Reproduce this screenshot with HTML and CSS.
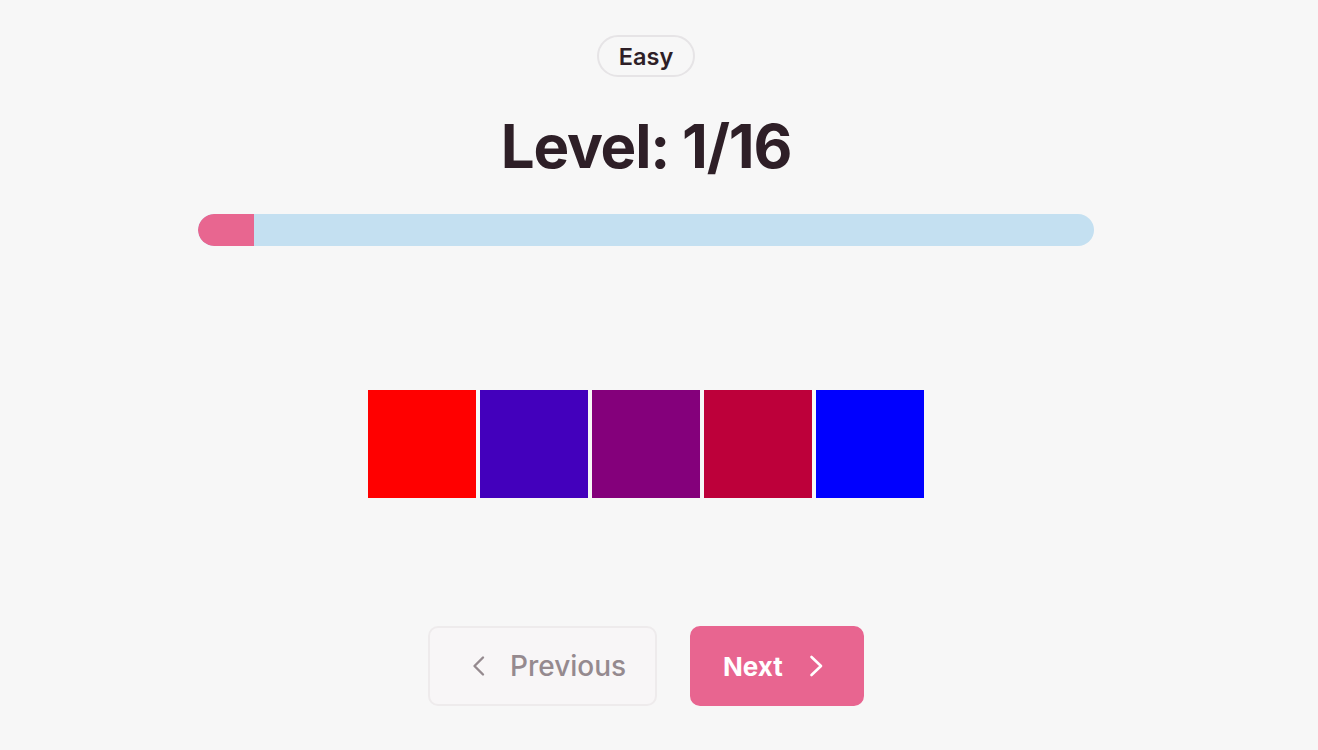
FILE: index.html
```html
<!DOCTYPE html>
<html lang="en">
<head>
<meta charset="utf-8">
<title>Level 1/16</title>
<link rel="stylesheet" href="styles.css">
</head>
<body>
<main class="game">
  <span class="badge">Easy</span>
  <h1 class="title">Level: 1/16</h1>
  <div class="progress"><div class="progress-fill" style="width: 6.25%"></div></div>
  <div class="swatches">
    <div class="swatch" style="background:#ff0000"></div>
    <div class="swatch" style="background:#4300bc"></div>
    <div class="swatch" style="background:#84007b"></div>
    <div class="swatch" style="background:#bd003a"></div>
    <div class="swatch" style="background:#0000ff"></div>
  </div>
  <div class="nav">
    <button class="btn btn-prev" type="button">
      <svg class="chev" width="24" height="24" viewBox="0 0 24 24" aria-hidden="true"><polyline points="21,3.5 12.5,12 21,20.5" /></svg>
      <span>Previous</span>
    </button>
    <button class="btn btn-next" type="button">
      <span>Next</span>
      <svg class="chev" width="24" height="24" viewBox="0 0 24 24" aria-hidden="true"><polyline points="3.5,3 13,12 3.5,21" /></svg>
    </button>
  </div>
</main>
</body>
</html>
```

FILE: styles.css
```css
* { box-sizing: border-box; }

html, body {
  margin: 0;
  padding: 0;
  background: #f7f7f7;
}

body {
  font-family: Inter, "Noto Sans", "Liberation Sans", sans-serif;
  color: #2e1f27;
}

.game {
  width: 1292px;
  display: flex;
  flex-direction: column;
  align-items: center;
  padding-top: 35px;
}

.badge {
  display: inline-flex;
  align-items: center;
  justify-content: center;
  height: 42px;
  padding: 0 20px;
  border: 2px solid #e6e4e6;
  border-radius: 21px;
  font-size: 23.5px;
  font-weight: 600;
  color: #2e1f27;
}

.title {
  margin: 33px 0 0;
  font-size: 60px;
  line-height: 72px;
  font-weight: 700;
  letter-spacing: -1.2px;
  color: #2e1f27;
}

.progress {
  margin-top: 32px;
  width: 896px;
  height: 32px;
  border-radius: 16px;
  background: #c4e0f1;
  overflow: hidden;
}

.progress-fill {
  height: 100%;
  background: #e86690;
  border-radius: 16px 0 0 16px;
}

.swatches {
  margin-top: 144px;
  display: flex;
  gap: 4px;
}

.swatch {
  width: 108px;
  height: 108px;
}

.nav {
  margin-top: 128px;
  display: flex;
  gap: 33px;
}

.btn {
  display: inline-flex;
  align-items: center;
  height: 80px;
  padding: 0 31px;
  border-radius: 10px;
  font-family: inherit;
  font-size: 26px;
  gap: 25px;
  cursor: pointer;
}

.btn-prev {
  width: 229px;
  background: #f8f6f7;
  border: 2px solid #eeebec;
  color: #958a8f;
  font-size: 28px;
  font-weight: 500;
  gap: 24px;
  padding: 0 28px 0 32px;
}

.btn-next {
  width: 174px;
  background: #e86590;
  border: 2px solid #e86590;
  color: #ffffff;
  font-weight: 700;
}

.chev {
  flex: none;
  fill: none;
  stroke: currentColor;
  stroke-width: 2.6;
  stroke-linecap: round;
  stroke-linejoin: round;
}

.btn-prev .chev { stroke-width: 2.4; }
```
